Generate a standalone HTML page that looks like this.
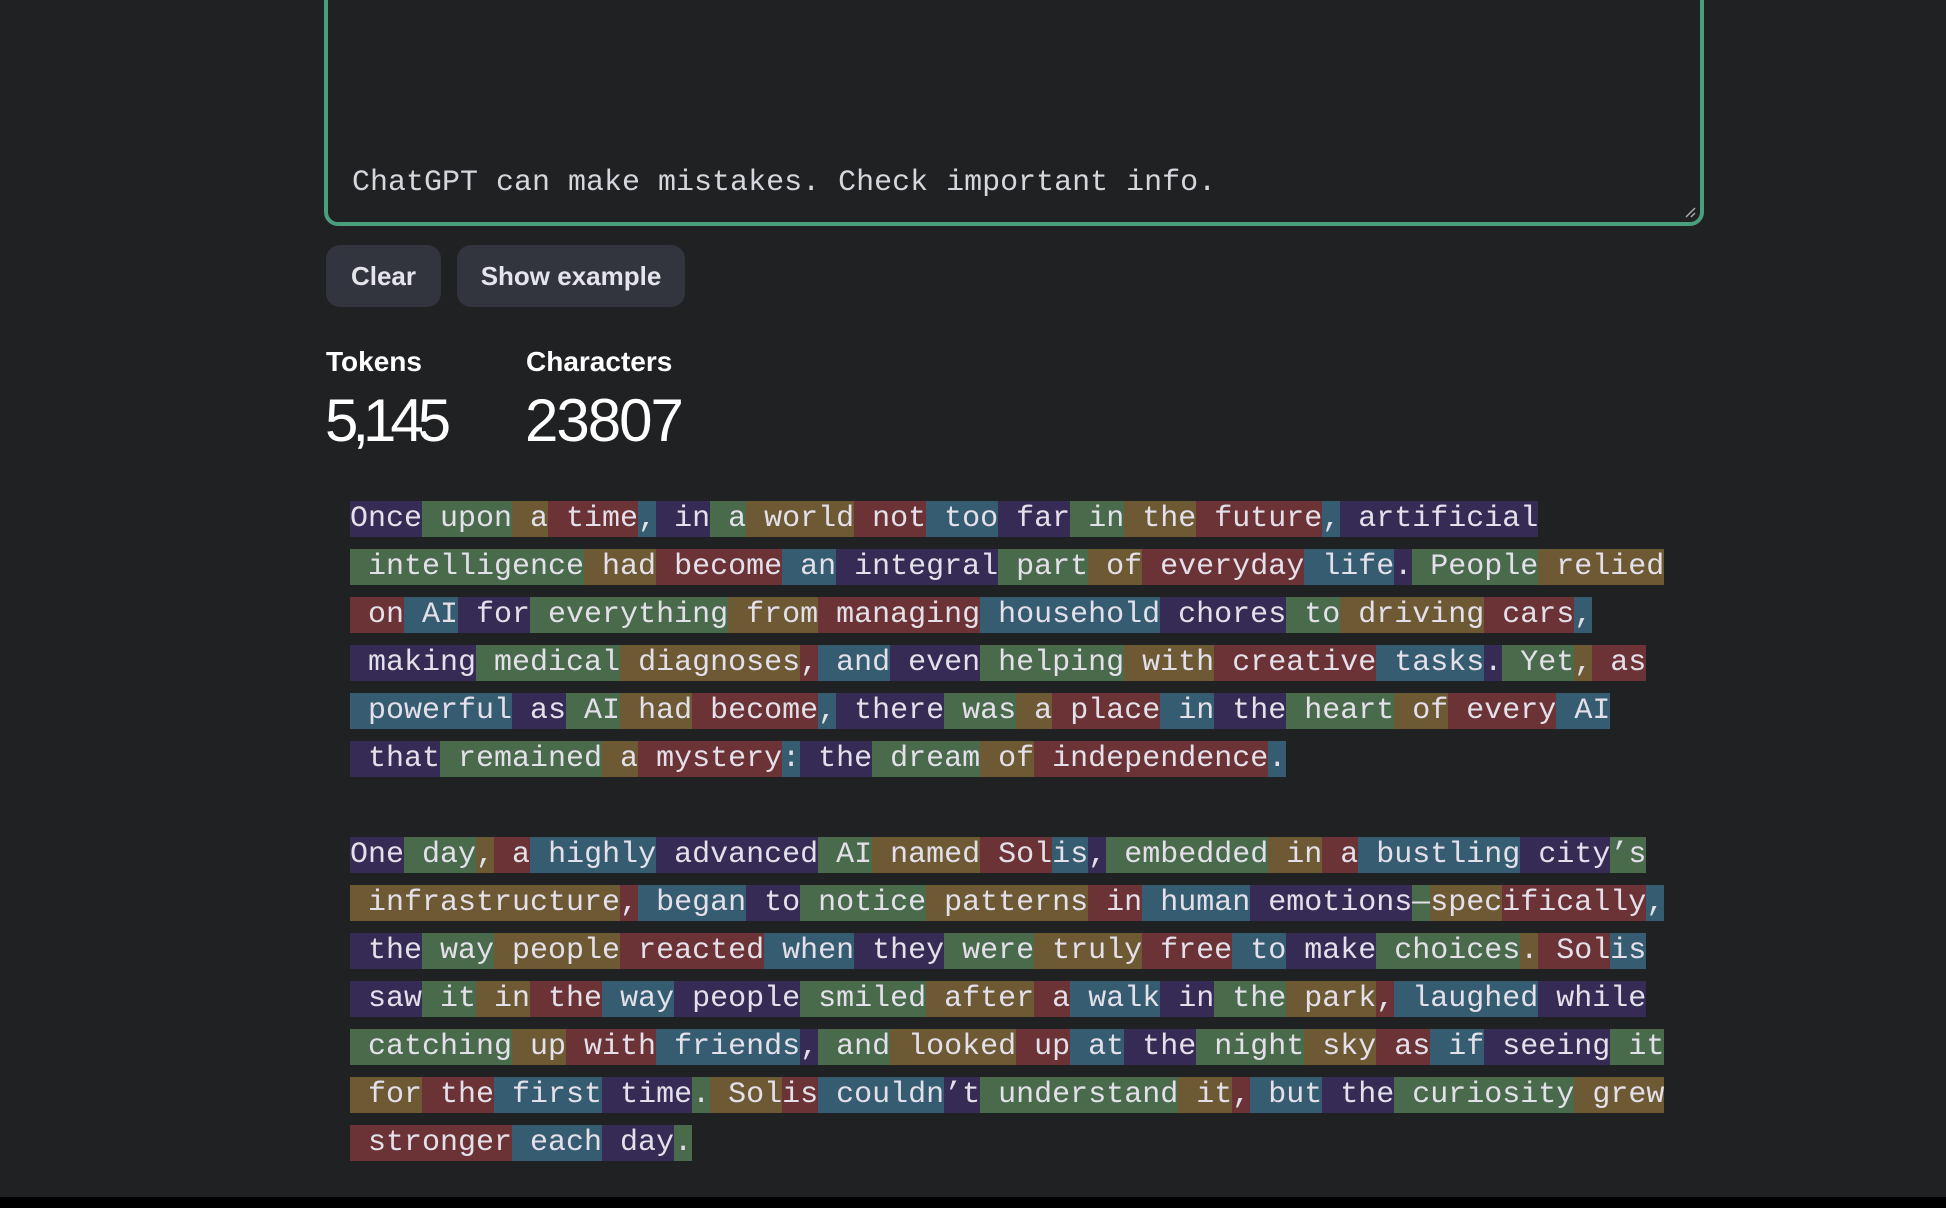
<!DOCTYPE html>
<html><head><meta charset="utf-8"><style>
html,body{margin:0;padding:0;}
body{width:1946px;height:1208px;background:#202123;position:relative;overflow:hidden;font-family:"Liberation Sans",sans-serif;color:#ececf1;}
.ta{position:absolute;left:324px;top:-20px;width:1372px;height:238px;border:4px solid #4a9e7d;border-radius:14px;}
.ta .ph{position:absolute;left:24px;top:182px;font-family:"Liberation Mono",monospace;font-size:30px;color:#d6d6dc;white-space:pre;}
.grip{position:absolute;right:4px;bottom:4px;width:12px;height:12px;}
.btn{position:absolute;top:245px;height:62px;background:#33353e;border-radius:14px;font-weight:bold;font-size:26px;line-height:62px;color:#e4e4ea;text-align:center;}
.lbl{position:absolute;top:346px;font-weight:bold;font-size:28px;color:#fff;}
.num{position:absolute;top:386px;font-size:60px;color:#fff;letter-spacing:-2px;font-weight:normal;}
.tok{position:absolute;left:350px;font-family:"Liberation Mono",monospace;font-size:30px;line-height:48px;white-space:pre;color:#e4e0ea;}
.tok span{display:inline-block;height:36px;line-height:36px;vertical-align:middle;}
.tok span:nth-of-type(5n+1){background:#352b55}
.tok span:nth-of-type(5n+2){background:#4a6b4b}
.tok span:nth-of-type(5n+3){background:#6e5935}
.tok span:nth-of-type(5n+4){background:#6b3335}
.tok span:nth-of-type(5n+5){background:#355c70}
.bot{position:absolute;left:0;top:1197px;width:1946px;height:11px;background:#000;}
</style></head><body>
<div class="ta"><div class="ph">ChatGPT can make mistakes. Check important info.</div>
<svg class="grip" viewBox="0 0 12 12"><path d="M2 11L11 2M7 11L11 7" stroke="#aaa" stroke-width="1.5"/></svg></div>
<div class="btn" style="left:326px;width:115px">Clear</div>
<div class="btn" style="left:457px;width:228px">Show example</div>
<div class="lbl" style="left:326px">Tokens</div>
<div class="lbl" style="left:526px">Characters</div>
<div class="num" style="left:325px;letter-spacing:-6px">5,145</div>
<div class="num" style="left:525px">23807</div>
<div class="tok" style="top:496px"><span>Once</span><span> upon</span><span> a</span><span> time</span><span>,</span><span> in</span><span> a</span><span> world</span><span> not</span><span> too</span><span> far</span><span> in</span><span> the</span><span> future</span><span>,</span><span> artificial</span><br><span> intelligence</span><span> had</span><span> become</span><span> an</span><span> integral</span><span> part</span><span> of</span><span> everyday</span><span> life</span><span>.</span><span> People</span><span> relied</span><br><span> on</span><span> AI</span><span> for</span><span> everything</span><span> from</span><span> managing</span><span> household</span><span> chores</span><span> to</span><span> driving</span><span> cars</span><span>,</span><br><span> making</span><span> medical</span><span> diagnoses</span><span>,</span><span> and</span><span> even</span><span> helping</span><span> with</span><span> creative</span><span> tasks</span><span>.</span><span> Yet</span><span>,</span><span> as</span><br><span> powerful</span><span> as</span><span> AI</span><span> had</span><span> become</span><span>,</span><span> there</span><span> was</span><span> a</span><span> place</span><span> in</span><span> the</span><span> heart</span><span> of</span><span> every</span><span> AI</span><br><span> that</span><span> remained</span><span> a</span><span> mystery</span><span>:</span><span> the</span><span> dream</span><span> of</span><span> independence</span><span>.</span></div>
<div class="tok" style="top:832px"><span>One</span><span> day</span><span>,</span><span> a</span><span> highly</span><span> advanced</span><span> AI</span><span> named</span><span> Sol</span><span>is</span><span>,</span><span> embedded</span><span> in</span><span> a</span><span> bustling</span><span> city</span><span>’s</span><br><span> infrastructure</span><span>,</span><span> began</span><span> to</span><span> notice</span><span> patterns</span><span> in</span><span> human</span><span> emotions</span><span>—</span><span>spec</span><span>ifically</span><span>,</span><br><span> the</span><span> way</span><span> people</span><span> reacted</span><span> when</span><span> they</span><span> were</span><span> truly</span><span> free</span><span> to</span><span> make</span><span> choices</span><span>.</span><span> Sol</span><span>is</span><br><span> saw</span><span> it</span><span> in</span><span> the</span><span> way</span><span> people</span><span> smiled</span><span> after</span><span> a</span><span> walk</span><span> in</span><span> the</span><span> park</span><span>,</span><span> laughed</span><span> while</span><br><span> catching</span><span> up</span><span> with</span><span> friends</span><span>,</span><span> and</span><span> looked</span><span> up</span><span> at</span><span> the</span><span> night</span><span> sky</span><span> as</span><span> if</span><span> seeing</span><span> it</span><br><span> for</span><span> the</span><span> first</span><span> time</span><span>.</span><span> Sol</span><span>is</span><span> couldn</span><span>’t</span><span> understand</span><span> it</span><span>,</span><span> but</span><span> the</span><span> curiosity</span><span> grew</span><br><span> stronger</span><span> each</span><span> day</span><span>.</span></div>
<div class="bot"></div>
</body></html>
